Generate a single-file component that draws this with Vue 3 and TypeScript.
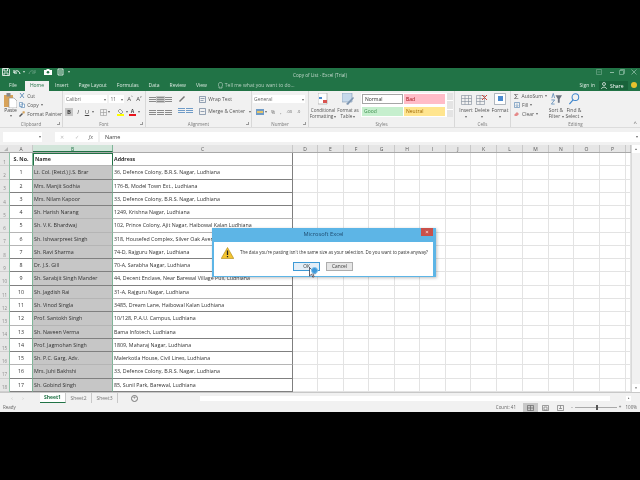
<script setup lang="ts">
const columns = [
  { name: 'A', width: 23 }, { name: 'B', width: 80 }, { name: 'C', width: 180 },
  { name: 'D', width: 25 }, { name: 'E', width: 26 }, { name: 'F', width: 25 },
  { name: 'G', width: 26 }, { name: 'H', width: 25 }, { name: 'I', width: 26 },
  { name: 'J', width: 25 }, { name: 'K', width: 26 }, { name: 'L', width: 26 },
  { name: 'M', width: 26 }, { name: 'N', width: 25 }, { name: 'O', width: 26 },
  { name: 'P', width: 26 }, { name: '', width: 5 }
]
const gridTemplate = columns.map(c => c.width + 'px').join(' ')
const blanks = columns.slice(3)

const people = [
  ['Lt. Col. (Retd.) J.S. Brar', '36, Defence Colony, B.R.S. Nagar, Ludhiana'],
  ['Mrs. Manjit Sodhia', '176-B, Model Town Ext., Ludhiana'],
  ['Mrs. Nilam Kapoor', '33, Defence Colony, B.R.S. Nagar, Ludhiana'],
  ['Sh. Harish Narang', '1249, Krishna Nagar, Ludhiana'],
  ['Sh. V.K. Bhardwaj', '102, Prince Colony, Ajit Nagar, Haibowal Kalan Ludhiana'],
  ['Sh. Ishwarpreet Singh', '318, Housefed Complex, Silver Oak Avenue, Ludhiana'],
  ['Sh. Ravi Sharma', '74-D, Rajguru Nagar, Ludhiana'],
  ['Dr. J.S. Gill', '70-A, Sarabha Nagar, Ludhiana'],
  ['Sh. Sarabjit Singh Mander', '44, Decent Enclave, Near Barewal Village Puli, Ludhiana'],
  ['Sh. Jagdish Rai', '31-A, Rajguru Nagar, Ludhiana'],
  ['Sh. Vinod Singla', '3485, Dream Lane, Haibowal Kalan Ludhiana'],
  ['Prof. Santokh Singh', '10/128, P.A.U. Campus, Ludhiana'],
  ['Sh. Naveen Verma', 'Bama Infotech, Ludhiana'],
  ['Prof. Jagmohan Singh', '1809, Maharaj Nagar, Ludhiana'],
  ['Sh. P.C. Garg, Adv.', 'Malerkotla House, Civil Lines, Ludhiana'],
  ['Mrs. Juhi Bakhshi', '33, Defence Colony, B.R.S. Nagar, Ludhiana'],
  ['Sh. Gobind Singh', '85, Sunil Park, Barewal, Ludhiana']
]
const tabs = ['Insert', 'Page Layout', 'Formulas', 'Data', 'Review', 'View']
// the video scaling leaves some row lines paler than others
const softRows = [1, 5, 6, 7, 11, 13, 16]
</script>

<template>
  <div class="screen">
    <div class="excel">
      <header class="titlebar">
        <div class="qat">
          <svg width="8" height="8" viewBox="0 0 8 8"><path d="M.5.5h6l1 1v6h-7z M2 .5v2.500h3.500V.5 M2 7.500V5h4v2.500" fill="none" stroke="#fff" stroke-width=".8"/></svg>
          <svg class="q-undo" width="8" height="7" viewBox="0 0 8 7"><path d="M1 3.500C3 1 6 1 7 5M1 1v3h3" fill="none" stroke="#fff"/></svg>
          <i class="caret q-c1"></i>
          <svg class="q-redo" width="8" height="7" viewBox="0 0 8 7"><path d="M7 3.500C5 1 2 1 1 5M7 1v3H4" fill="none" stroke="#5f9a7b"/></svg>
          <svg class="q-cam" width="8" height="6" viewBox="0 0 8 6"><path d="M0 1h2l1-1h2l1 1h2v5H0z" fill="#fff"/><circle cx="4" cy="3.300" r="1.300" fill="#217346"/></svg>
          <svg class="q-doc" width="7" height="8" viewBox="0 0 7 8"><path d="M1 1h5v6H1zM2 3h3M2 5h3" fill="none" stroke="#fff" stroke-width=".8"/></svg>
          <i class="caret q-c2"></i>
        </div>
        <div class="doc-title">Copy of List - Excel (Trial)</div>
        <div class="win-buttons">
          <svg width="6" height="6" viewBox="0 0 6 6"><path d="M.5.5h5v5h-5z M1.500 3h3" fill="none" stroke="#6fa689" stroke-width=".7"/></svg>
          <span class="win-min"></span>
          <svg width="6" height="6" viewBox="0 0 6 6"><path d="M.5 1.500h4v4h-4zM1.500 1.500V.5h4v4h-1" fill="none" stroke="#8dbba3" stroke-width=".7"/></svg>
          <svg width="6" height="6" viewBox="0 0 6 6"><path d="M.5.5l5 5M5.500.5l-5 5" stroke="#8dbba3" stroke-width=".8"/></svg>
        </div>
      </header>

      <nav class="tabbar">
        <span class="file-tab">File</span>
        <span class="home-tab">Home</span>
        <span v-for="t in tabs" :key="t" class="tab">{{ t }}</span>
        <span class="tell">
          <svg width="5" height="7" viewBox="0 0 5 7"><path d="M1 4.500C-.5 2 1 .5 2.500.5S5.500 2 4 4.500V6H1z" fill="none" stroke="#cfe0d6" stroke-width=".6"/></svg>
          Tell me what you want to do...
        </span>
        <span class="signin">Sign in</span>
        <span class="share">
          <svg width="7" height="7" viewBox="0 0 7 7"><circle cx="3" cy="2" r="1.500" fill="none" stroke="#fff" stroke-width=".7"/><path d="M.5 7C.5 4.500 5.500 4.500 5.500 7" fill="none" stroke="#fff" stroke-width=".7"/></svg>
          Share
        </span>
        <span class="smiley"></span>
      </nav>

      <section class="ribbon">
        <div class="group g-clip">
          <div class="group-body clip-body">
            <div class="paste">
              <svg width="13" height="15" viewBox="0 0 13 15"><rect x="0" y="2" width="9" height="12" fill="#d8a35a"/><rect x="2.500" y="0" width="4" height="3.500" fill="#8a8a8a"/><path d="M5 5h5l3 3v7H5z" fill="#fff" stroke="#8a8a8a" stroke-width=".6"/></svg>
              <span>Paste</span>
              <i class="caret dark"></i>
            </div>
            <div class="clip-list">
              <span><svg width="6" height="6" viewBox="0 0 6 6"><path d="M1 0l4 5M5 0L1 5" stroke="#4d7fb0" stroke-width=".8"/></svg>Cut</span>
              <span><svg width="6" height="6" viewBox="0 0 6 6"><path d="M.5.5h3v4h-3zM2 2h3.500v3.500H2z" fill="#fff" stroke="#4d7fb0" stroke-width=".6"/></svg>Copy <i class="caret dark"></i></span>
              <span><svg width="6" height="6" viewBox="0 0 6 6"><path d="M0 5l3-3 1 1-3 3z" fill="#555"/><path d="M3 1l2-1 1 1-1 2z" fill="#d8a35a"/></svg>Format Painter</span>
            </div>
          </div>
          <div class="group-label launcher">Clipboard</div>
        </div>

        <div class="group g-font">
          <div class="group-body stack">
            <div class="row">
              <span class="select font-name">Calibri<i class="caret dark"></i></span>
              <span class="select font-size">11<i class="caret dark"></i></span>
              <span class="glyph">A<sup>^</sup></span>
              <span class="glyph">A<sup>v</sup></span>
            </div>
            <div class="row font-tools">
              <b class="toggle active">B</b>
              <i class="toggle">I</i>
              <u class="toggle">U</u>
              <i class="caret dark"></i>
              <svg class="t-border" width="7" height="7" viewBox="0 0 7 7"><path d="M.5.500h6v6h-6zM3.500.5v6M.5 3.500h6" fill="none" stroke="#999" stroke-width=".6"/></svg>
              <i class="caret dark"></i>
              <span class="swatch t-fill"><svg width="7" height="5" viewBox="0 0 7 5"><path d="M3 0l3 3-2 2-3-3z" fill="none" stroke="#666" stroke-width=".6"/></svg><em class="yellow"></em></span>
              <i class="caret dark"></i>
              <span class="swatch"><span class="a">A</span><em class="red"></em></span>
              <i class="caret dark"></i>
            </div>
          </div>
          <div class="group-label launcher">Font</div>
        </div>

        <div class="group g-align">
          <div class="group-body align-body">
            <div class="align-grid">
              <span class="lines top"></span><span class="lines mid active"></span><span class="lines bot"></span>
              <span class="lines"></span><span class="lines"></span><span class="lines"></span>
            </div>
            <div class="align-mid">
              <svg width="8" height="7" viewBox="0 0 8 7"><path d="M1 6l5-5 1 1-5 5z" fill="#777"/></svg>
              <span class="indent-icons"><span class="lines blue"></span><span class="lines blue"></span></span>
            </div>
            <div class="align-right">
              <span><svg width="7" height="7" viewBox="0 0 7 7"><path d="M.5.500h6v6h-6zM1.500 2.500h4M1.500 4.500h3" fill="none" stroke="#6b7f99" stroke-width=".7"/></svg>Wrap Text</span>
              <span><svg width="7" height="7" viewBox="0 0 7 7"><path d="M.5.500h6v6h-6zM1.500 3.500h4" fill="none" stroke="#6b7f99" stroke-width=".7"/></svg>Merge &amp; Center<i class="caret dark merge-caret"></i></span>
            </div>
          </div>
          <div class="group-label launcher">Alignment</div>
        </div>

        <div class="group g-number">
          <div class="group-body stack number-body">
            <span class="select general">General<i class="caret dark"></i></span>
            <div class="row number-tools">
              <svg width="8" height="6" viewBox="0 0 8 6"><rect width="8" height="6" fill="#6f9bc7"/><rect x="1" y="2" width="6" height="2" fill="#e2c36b"/></svg>
              <i class="caret dark"></i>
              <span class="pct">%</span>
              <span class="pct comma">,</span>
              <span class="pct dec">.00</span>
              <span class="pct dec">.0</span>
            </div>
          </div>
          <div class="group-label launcher">Number</div>
        </div>

        <div class="group g-styles">
          <div class="group-body styles-body">
            <div class="big narrow">
              <svg width="11" height="12" viewBox="0 0 11 12"><path d="M0 0h9v11H0z" fill="#fff" stroke="#999" stroke-width=".6"/><rect x="1" y="4" width="3" height="2" fill="#4b8bd0"/><rect x="5" y="7" width="4" height="3" fill="#d9534f"/></svg>
              <span>Conditional<br>Formatting <i class="caret dark"></i></span>
            </div>
            <div class="big narrow table-cmd">
              <svg width="12" height="12" viewBox="0 0 12 12"><path d="M0 0h10v9H0z" fill="#c6d9ec" stroke="#7f97b2" stroke-width=".6"/><path d="M4 11l7-7 1 1-6 7z" fill="#7f97b2"/></svg>
              <span>Format as<br>Table <i class="caret dark"></i></span>
            </div>
            <div class="gallery">
              <div class="cells">
                <span class="style normal">Normal</span>
                <span class="style bad">Bad</span>
                <span class="style good">Good</span>
                <span class="style neutral">Neutral</span>
              </div>
              <div class="gallery-scroll"><i></i><i></i><i></i></div>
            </div>
          </div>
          <div class="group-label">Styles</div>
        </div>

        <div class="group g-cells">
          <div class="group-body cells-body">
            <div class="big cell-cmd">
              <svg width="11" height="12" viewBox="0 0 11 12"><path d="M.5 2.500h10v9H.5zM.5 5.500h10M.5 8.500h10M4 2.500v9M7.500 2.500v9" fill="none" stroke="#7f8c99" stroke-width=".6"/></svg>
              <span>Insert</span><i class="caret dark"></i>
            </div>
            <div class="big cell-cmd">
              <svg width="12" height="12" viewBox="0 0 12 12"><path d="M.5 2.500h8v9h-8zM.5 5.500h8M.5 8.500h8M4 2.500v9" fill="none" stroke="#7f8c99" stroke-width=".6"/><path d="M6 2l5 5M11 2L6 7" stroke="#d0493a"/></svg>
              <span>Delete</span><i class="caret dark"></i>
            </div>
            <div class="big cell-cmd last">
              <svg width="12" height="12" viewBox="0 0 12 12"><path d="M.5.500h11v11H.5z" fill="#fff" stroke="#7f8c99" stroke-width=".6"/><rect x="4" y="3" width="5" height="5" fill="#4b8bd0"/></svg>
              <span>Format</span><i class="caret dark"></i>
            </div>
          </div>
          <div class="group-label">Cells</div>
        </div>

        <div class="group g-edit">
          <div class="group-body edit-body">
            <div class="clip-list edit-list">
              <span><b class="sigma">Σ</b>AutoSum <i class="caret dark"></i></span>
              <span><svg width="6" height="6" viewBox="0 0 6 6"><path d="M.5.500h5v5h-5zM3 1.500v3M1.800 3.400L3 4.600l1.200-1.200" fill="none" stroke="#4d7fb0" stroke-width=".6"/></svg>Fill <i class="caret dark"></i></span>
              <span><svg width="6" height="6" viewBox="0 0 6 6"><path d="M0 4l3-3 2 2-2 2H1z" fill="#e58a8a"/></svg>Clear <i class="caret dark"></i></span>
            </div>
            <div class="big sort">
              <svg width="12" height="12" viewBox="0 0 13 12"><path d="M2 5L3.500 0 5 5M1.500 7h3.500L1.500 11.500h3.500" fill="none" stroke="#4d7fb0" stroke-width=".8"/><path d="M6 2h7L10.500 6v4h-2V6z" fill="#6b7380"/></svg>
              <span>Sort &amp;<br>Filter <i class="caret dark"></i></span>
            </div>
            <div class="big sort">
              <svg width="12" height="12" viewBox="0 0 12 13"><circle cx="7.500" cy="4.500" r="3.600" fill="none" stroke="#3f86cc" stroke-width="1.100"/><path d="M5 7.500L1 12" stroke="#3f86cc" stroke-width="1.300"/></svg>
              <span>Find &amp;<br>Select <i class="caret dark"></i></span>
            </div>
          </div>
          <div class="group-label">Editing</div>
          <span class="collapse">^</span>
        </div>
      </section>

      <div class="formula">
        <div class="namebox"><i class="caret dark"></i></div>
        <span class="grip"></span>
        <div class="fx">
          <span>✕</span><span>✓</span><em>fx</em>
        </div>
        <div class="formula-input">Name</div>
        <i class="caret dark formula-drop"></i>
      </div>

      <div class="sheet-wrap">
        <div class="sheet">
          <div class="col-heads" :style="{ gridTemplateColumns: '10px ' + gridTemplate }">
            <span class="corner"></span>
            <span v-for="c in columns" :key="c.name" class="col-head" :class="{ picked: c.name === 'B' }">{{ c.name }}</span>
          </div>
          <div class="body">
            <div class="row-heads">
              <span v-for="n in 18" :key="n">{{ n }}</span>
            </div>
            <div class="cells-grid" :style="{ gridTemplateColumns: gridTemplate }">
              <template v-for="n in 18" :key="n">
                <span class="cell boxed center first-col" :class="{ bold: n === 1, soft: softRows.includes(n) }">{{ n === 1 ? 'S. No.' : n - 1 }}</span>
                <span class="cell boxed" :class="[n === 1 ? 'bold active-cell' : 'picked', { soft: softRows.includes(n) }]">{{ n === 1 ? 'Name' : people[n - 2][0] }}</span>
                <span class="cell boxed" :class="{ bold: n === 1, soft: softRows.includes(n) }">{{ n === 1 ? 'Address' : people[n - 2][1] }}</span>
                <span v-for="c in blanks" :key="c.name" class="cell empty"></span>
              </template>
            </div>
          </div>
        </div>
        <aside class="vscroll">
          <span class="arrow">▲</span>
          <span class="thumb"></span>
          <span class="arrow">▼</span>
        </aside>
      </div>

      <div class="sheetbar">
        <span class="nav">‹</span><span class="nav">›</span>
        <span class="sheet-tab current">Sheet1</span>
        <span class="sheet-tab">Sheet2</span>
        <span class="sheet-tab">Sheet3</span>
        <span class="add-sheet">+</span>
        <div class="hscroll"><span class="arrow">▸</span></div>
      </div>

      <footer class="statusbar">
        <span>Ready</span>
        <span class="count">Count: 41</span>
        <span class="view active"><svg width="7" height="6" viewBox="0 0 7 6"><path d="M.5.500h6v5h-6zM3.500.5v5M.5 3h6" fill="none" stroke="#666" stroke-width=".7"/></svg></span>
        <span class="view"><svg width="7" height="6" viewBox="0 0 7 6"><path d="M.5.500h6v5h-6zM2 2h3v3H2z" fill="none" stroke="#777" stroke-width=".7"/></svg></span>
        <span class="view"><svg width="7" height="6" viewBox="0 0 7 6"><path d="M.5.500h6v5h-6zM3.500.5v3M2 3.500h3" fill="none" stroke="#777" stroke-width=".7"/></svg></span>
        <span class="zoom-slider"><b>-</b><span class="track"><i></i></span><b>+</b></span>
        <span class="zoom-val">100%</span>
      </footer>

      <div class="dialog">
        <div class="dialog-title">
          <span>Microsoft Excel</span>
          <span class="dialog-close">×</span>
        </div>
        <div class="dialog-body">
          <div class="dialog-msg">
            <svg width="13" height="12" viewBox="0 0 13 12"><path d="M6.500.5L12.800 11.500H.2z" fill="#f4c430" stroke="#a88414" stroke-width=".6"/><path d="M6.500 3.500v4.500M6.500 9v1.300" stroke="#222" stroke-width="1.300"/></svg>
            <p>The data you're pasting isn't the same size as your selection. Do you want to paste anyway?</p>
          </div>
          <div class="dialog-actions">
            <button class="primary">OK</button>
            <button>Cancel</button>
          </div>
        </div>
        <div class="pointer">
          <svg width="7" height="11" viewBox="0 0 7 11"><path d="M.5.5v8.500l2-1.800 1.300 3 1.300-.6-1.300-2.900h2.700z" fill="#fff" stroke="#223" stroke-width=".7"/></svg>
          <span class="pointer-dot"></span>
        </div>
      </div>
    </div>
  </div>
</template>

<style>
html, body { margin: 0; background: #000; }
</style>

<style scoped>
.screen {
  width: 640px;
  height: 480px;
  padding-top: 68px;
  box-sizing: border-box;
  background: #000;
  overflow: hidden;
  font-family: "Open Sans", "Liberation Sans", sans-serif;
  color: #444;
}
.excel {
  position: relative;
  width: 640px;
  height: 344px;
  display: flex;
  flex-direction: column;
  background: #f1f1f1;
  font-size: 5px;
  line-height: 1;
  filter: blur(0.3px);
}
.caret {
  display: inline-block;
  flex: none;
  width: 0;
  height: 0;
  border-left: 1.500px solid transparent;
  border-right: 1.500px solid transparent;
  border-top: 2px solid #d5e5dc;
}
.caret.dark { border-top-color: #666; }

.titlebar {
  height: 13px;
  background: #217346;
  display: flex;
  align-items: center;
  color: #c4d9cd;
  flex: none;
}
.qat {
  display: flex;
  align-items: center;
  align-self: flex-start;
  height: 8px;
  padding-left: 2px;
  width: 90px;
  box-sizing: border-box;
}
.q-undo { margin-left: 3px; }
.q-c1 { margin-left: 1.500px; }
.q-redo { margin-left: 3.500px; }
.q-cam { margin-left: 8px; }
.q-doc { margin-left: 4.500px; }
.q-c2 { margin-left: 4px; }
.doc-title {
  flex: 1;
  text-align: center;
  font-size: 4.700px;
  padding-top: 1px;
}
.win-buttons {
  display: flex;
  align-items: center;
  align-self: flex-start;
  height: 8px;
  width: 90px;
  justify-content: flex-end;
  padding-right: 3px;
  box-sizing: border-box;
}
.win-min { width: 4px; height: 1px; background: #8dbba3; margin: 0 5px 0 8px; }
.win-buttons svg:last-child { margin-left: 6px; }

.tabbar {
  height: 10px;
  background: #217346;
  display: flex;
  align-items: flex-start;
  color: #dbe9e1;
  flex: none;
}
.tabbar > span { line-height: 8px; }
.file-tab { margin-left: 9px; width: 16px; }
.home-tab {
  width: 24px;
  height: 10px;
  background: #f1f1f1;
  color: #217346;
  text-align: center;
  margin-right: 6px;
}
.tab { margin-right: 10px; }
.tell {
  display: flex;
  align-items: center;
  gap: 2px;
  margin-left: 1px;
  color: #b7d1c2;
}
.signin { margin-left: auto; }
.share {
  display: flex;
  align-items: center;
  gap: 2px;
  background: #18633a;
  margin-left: 4px;
  width: 29px;
  padding-left: 2px;
  box-sizing: border-box;
  height: 9px;
  color: #fff;
}
.smiley {
  width: 6px;
  height: 6px;
  border-radius: 50%;
  background: #e8c22e;
  margin: 1px 3px 0 3px;
}

.ribbon {
  height: 37px;
  flex: none;
  display: flex;
  background: #f1f1f1;
  border-bottom: 1px solid #dcdcdc;
  box-sizing: border-box;
}
.group {
  display: flex;
  flex-direction: column;
  border-right: 1px solid #d8d8d8;
  box-sizing: border-box;
  flex: none;
  position: relative;
}
.g-clip { width: 63px; }
.g-font { width: 83px; }
.g-align { width: 106px; }
.g-number { width: 57px; }
.g-styles { width: 146px; }
.g-cells { width: 56px; }
.g-edit { flex: 1; border-right: 0; }
.group-body { flex: 1; display: flex; min-height: 0; }
.group-label {
  height: 7px;
  padding-top: 2px;
  box-sizing: border-box;
  text-align: center;
  font-size: 4.500px;
  color: #777;
}
.launcher::after {
  content: "";
  position: absolute;
  right: 2px;
  bottom: 2px;
  width: 2px;
  height: 2px;
  border-right: 1px solid #999;
  border-bottom: 1px solid #999;
}
.stack { flex-direction: column; }
.row { display: flex; align-items: center; height: 8px; }

.clip-body { padding: 2px 0 0 4px; gap: 2px; }
.paste {
  display: flex;
  flex-direction: column;
  align-items: center;
  width: 14px;
}
.paste .caret { margin-top: 2px; }
.clip-list {
  display: flex;
  flex-direction: column;
  gap: 3px;
  color: #555;
}
.clip-list span { display: flex; align-items: center; gap: 2px; white-space: nowrap; height: 6px; }

.g-font .group-body { padding: 4px 0 0 2px; gap: 5px; }
.select {
  background: #fff;
  height: 8px;
  display: flex;
  align-items: center;
  justify-content: space-between;
  padding: 1px 1px 0;
  box-sizing: border-box;
  color: #666;
}
.font-name { width: 43px; margin-right: 2px; }
.font-size { width: 15px; margin-right: 3px; }
.glyph { font-size: 6px; width: 9px; }
.glyph sup { font-size: 3px; }
.font-tools { gap: 1px; }
.toggle {
  width: 8px;
  height: 8px;
  text-align: center;
  line-height: 8px;
  font-size: 6px;
  color: #444;
}
.toggle.active { background: #c6c6c6; }
.t-border { margin-left: 5px; }
.t-fill { margin-left: 5.500px; }
.swatch { display: flex; flex-direction: column; align-items: center; width: 8px; }
.swatch em { display: block; width: 7px; height: 2px; }
.yellow { background: #ffff00; }
.red { background: #e8141c; }
.swatch .a { font-size: 5px; color: #444; font-weight: 700; }

.align-body { padding: 4px 0 0 3px; }
.align-grid {
  display: grid;
  grid-template-columns: repeat(3, 8px);
  grid-auto-rows: 8px;
  row-gap: 5px;
  align-items: center;
  height: 21px;
}
.lines {
  display: block;
  width: 7px;
  height: 5px;
  background: repeating-linear-gradient(#8a8a8a 0 1px, transparent 1px 2px);
}
.lines.active { outline: 1px solid #c6c6c6; background-color: #c6c6c6; }
.lines.blue { background: repeating-linear-gradient(#6f9bc7 0 1px, transparent 1px 2px); }
.align-mid {
  display: flex;
  flex-direction: column;
  gap: 6px;
  margin-left: 5px;
  width: 22px;
}
.indent-icons { display: flex; gap: 1px; }
.align-right {
  display: flex;
  flex-direction: column;
  gap: 5px;
  color: #555;
  padding-top: 1px;
}
.align-right span { display: flex; align-items: center; gap: 2px; white-space: nowrap; height: 7px; }
.merge-caret { margin-left: 2px; }

.number-body { padding: 4px 0 0 1px; gap: 5px; }
.general { width: 52px; }
.number-tools { padding-left: 3px; color: #666; }
.number-tools .caret { margin-left: 1px; }
.pct { font-size: 5px; margin-left: 4px; }
.pct.comma { margin-left: 5px; }
.pct.dec { font-size: 4px; margin-left: 5px; }

.styles-body { padding: 2px 0 0 2px; gap: 2px; }
.big {
  display: flex;
  flex-direction: column;
  align-items: center;
  color: #555;
  gap: 2px;
  text-align: center;
  white-space: nowrap;
}
.narrow { width: 24px; line-height: 6px; flex: none; font-size: 4.600px; }
.table-cmd { width: 22px; }
.gallery {
  display: flex;
  background: #fff;
  height: 24px;
  padding: 1px 0 0 1px;
  box-sizing: border-box;
  width: 92px;
  gap: 2px;
  flex: none;
}
.cells {
  display: grid;
  grid-template-columns: 41px 41px;
  grid-template-rows: 10px 9px;
  gap: 3px 1px;
}
.style { display: flex; align-items: center; padding-left: 2px; color: #333; }
.normal { border: 1px solid #a6a6a6; box-sizing: border-box; background: #fff; }
.bad { background: #ffbcc8; color: #9c0006; }
.good { background: #c6efce; color: #3f8f4f; }
.neutral { background: #ffe58f; color: #9c6500; }
.gallery-scroll {
  display: grid;
  grid-auto-rows: 1fr;
  flex: 1;
  gap: 1px;
  margin-top: -1px;
}
.gallery-scroll i { background: #e4e4e4; }

.cells-body { padding: 2px 0 0 4px; gap: 2px; }
.cell-cmd { gap: 3px; width: 14px; }
.cell-cmd.last { margin-left: 2px; }
.edit-body { padding: 0 0 0 3px; }
.edit-list { width: 33px; padding-top: 2px; flex: none; }
.sigma { font-size: 8px; color: #555; font-weight: 400; width: 6px; }
.sort { width: 18px; padding-top: 2px; line-height: 6px; flex: none; }
.collapse { position: absolute; right: 3px; bottom: 1px; color: #666; font-size: 6px; }

.formula {
  height: 10px;
  margin: 4px 0 3px;
  display: flex;
  align-items: stretch;
  flex: none;
}
.namebox {
  width: 39px;
  margin-left: 3px;
  background: #fff;
  display: flex;
  align-items: center;
  justify-content: flex-end;
  padding-right: 1px;
  box-sizing: border-box;
}
.grip { width: 13px; }
.fx {
  width: 43px;
  background: #fff;
  display: flex;
  align-items: center;
  justify-content: space-around;
  color: #bbb;
}
.fx em { color: #555; }
.formula-input {
  flex: 1;
  margin-left: 2px;
  background: #fff;
  display: flex;
  align-items: center;
  padding: 1px 0 0 5px;
  color: #444;
  font-size: 5.500px;
}
.formula-drop { position: absolute; right: 2px; top: 68px; }

.sheet-wrap {
  flex: 1;
  display: flex;
  min-height: 0;
  background: #fff;
}
.sheet { width: 631px; display: flex; flex-direction: column; overflow: hidden; }
.col-heads {
  display: grid;
  height: 8px;
  background: #e6e6e6;
  border-bottom: 1px solid #a9a9a9;
  box-sizing: border-box;
  flex: none;
}
.corner {
  width: 0;
  height: 0;
  margin: 2px 0 0 4px;
  border-left: 4px solid transparent;
  border-bottom: 4px solid #b5b5b5;
}
.col-head {
  text-align: center;
  color: #555;
  border-right: 1px solid #c8c8c8;
  line-height: 8px;
  font-size: 5px;
  box-sizing: border-box;
  overflow: hidden;
}
.col-head.picked {
  background: #d2e5da;
  color: #217346;
  border-bottom: 1px solid #217346;
}
.body { flex: 1; display: flex; min-height: 0; }
.row-heads {
  width: 10px;
  flex: none;
  display: grid;
  grid-auto-rows: 1fr;
  background: #e6e6e6;
  border-right: 1px solid #8fc4a8;
  box-sizing: border-box;
  color: #8a8a8a;
}
.row-heads span {
  display: flex;
  align-items: flex-end;
  justify-content: center;
  font-size: 4.500px;
  padding-bottom: 1px;
  box-sizing: border-box;
  border-bottom: 1px solid #cfcfcf;
}
.cells-grid {
  flex: 1;
  display: grid;
  grid-auto-rows: 1fr;
  min-width: 0;
}
.cell {
  box-sizing: border-box;
  display: flex;
  align-items: center;
  white-space: nowrap;
  min-width: 0;
  color: #333;
  font-size: 5.300px;
  border-right: 1px solid #e3e3e3;
  border-bottom: 1px solid #e3e3e3;
}
.boxed {
  border-right: 1px solid #7f7f7f;
  border-bottom: 1px solid #808080;
  padding: 1px 0 0 1px;
}
.boxed.soft { border-bottom-color: #b5b5b5; }
.center { justify-content: center; padding-left: 0; }
.first-col { border-right-color: #7fb598; }
.bold { font-weight: 700; }
.picked { background: #c6c6c6; border-right-color: #7fb598; }
.active-cell { border: 1px solid #217346; border-bottom-color: #217346; }

.vscroll {
  flex: 1;
  display: flex;
  flex-direction: column;
  background: #f1f1f1;
  border-left: 1px solid #d9d9d9;
  color: #666;
  font-size: 3px;
  text-align: center;
}
.arrow { height: 8px; line-height: 8px; background: #fff; font-size: 3px; color: #555; }
.thumb { flex: 1; background: #f1f1f1; }

.sheetbar {
  height: 11px;
  flex: none;
  display: flex;
  align-items: center;
  background: #f1f1f1;
  border-top: 1px solid #c8c8c8;
  box-sizing: border-box;
  color: #888;
}
.nav { width: 6px; margin-left: 9px; color: #bbb; text-align: center; }
.nav + .nav { margin-left: 5px; margin-right: 14px; }
.sheet-tab {
  width: 26px;
  height: 10px;
  display: flex;
  align-items: center;
  justify-content: center;
  border-right: 1px solid #c8c8c8;
  box-sizing: border-box;
  color: #777;
}
.sheet-tab.current {
  background: #fff;
  color: #217346;
  font-weight: 700;
  border-bottom: 1px solid #217346;
}
.add-sheet {
  width: 7px;
  height: 7px;
  border: 1px solid #777;
  border-radius: 50%;
  box-sizing: border-box;
  margin-left: 13px;
  display: flex;
  align-items: center;
  justify-content: center;
  color: #666;
  font-size: 5px;
}
.hscroll {
  margin-left: 62px;
  flex: 1;
  height: 5px;
  background: linear-gradient(90deg, #fff 0 410px, #f1f1f1 410px);
  border-right: 9px solid #f1f1f1;
  display: flex;
  justify-content: flex-end;
}
.hscroll .arrow { width: 5px; height: 5px; line-height: 5px; text-align: center; }

.statusbar {
  height: 9px;
  flex: none;
  display: flex;
  align-items: center;
  padding-left: 3px;
  color: #666;
  background: #f1f1f1;
  font-size: 4.500px;
}
.count { margin-left: auto; margin-right: 7px; }
.view {
  width: 15px;
  height: 9px;
  display: flex;
  align-items: center;
  justify-content: center;
}
.view.active { background: #c8c8c8; }
.zoom-slider { display: flex; align-items: center; gap: 1px; margin-left: 2px; width: 52px; flex: none; }
.zoom-slider b { font-weight: 400; width: 4px; text-align: center; }
.track {
  flex: 1;
  height: 1px;
  background: #aaa;
  position: relative;
}
.track i {
  position: absolute;
  left: 50%;
  top: -2px;
  width: 1.500px;
  height: 5px;
  background: #555;
}
.zoom-val { width: 18px; text-align: right; padding-right: 3px; box-sizing: border-box; flex: none; }

.dialog {
  position: absolute;
  left: 212px;
  top: 160px;
  width: 224px;
  height: 49px;
  background: #5db5e6;
  box-shadow: 1px 1px 3px rgba(0, 0, 0, 0.25);
  display: flex;
  flex-direction: column;
  padding: 0 3px 1px 2px;
  box-sizing: border-box;
}
.dialog-title {
  height: 14px;
  flex: none;
  display: flex;
  align-items: center;
  justify-content: center;
  color: #1d4a6e;
  font-size: 5.700px;
  position: relative;
}
.dialog-close {
  position: absolute;
  right: 0;
  top: 0;
  width: 12px;
  height: 8px;
  background: #c9504a;
  color: #fff;
  display: flex;
  align-items: center;
  justify-content: center;
  font-size: 6px;
}
.dialog-body {
  flex: 1;
  background: #fff;
  display: flex;
  flex-direction: column;
  padding: 4px 0 0 7px;
  box-sizing: border-box;
  min-height: 0;
}
.dialog-msg {
  display: flex;
  align-items: center;
  gap: 6px;
  height: 13px;
}
.dialog-msg p {
  margin: 0;
  font-size: 4.450px;
  color: #333;
  white-space: nowrap;
}
.dialog-actions {
  display: flex;
  gap: 6px;
  padding-left: 72px;
  margin-top: 3px;
}
.dialog-actions button {
  width: 27px;
  height: 9px;
  padding: 0;
  border: 1px solid #adadad;
  background: #e6e6e6;
  font: inherit;
  font-size: 4.800px;
  color: #333;
  border-radius: 0;
}
.dialog-actions .primary { border-color: #3d9ad6; background: #e3eef7; }
.pointer { position: absolute; left: 97px; top: 39px; }
.pointer svg { display: block; }
.pointer-dot {
  position: absolute;
  left: 2px;
  top: 0;
  width: 7px;
  height: 7px;
  border-radius: 50%;
  background: #3d98da;
  border: 1px solid #7cc0ec;
  box-sizing: border-box;
}
</style>
